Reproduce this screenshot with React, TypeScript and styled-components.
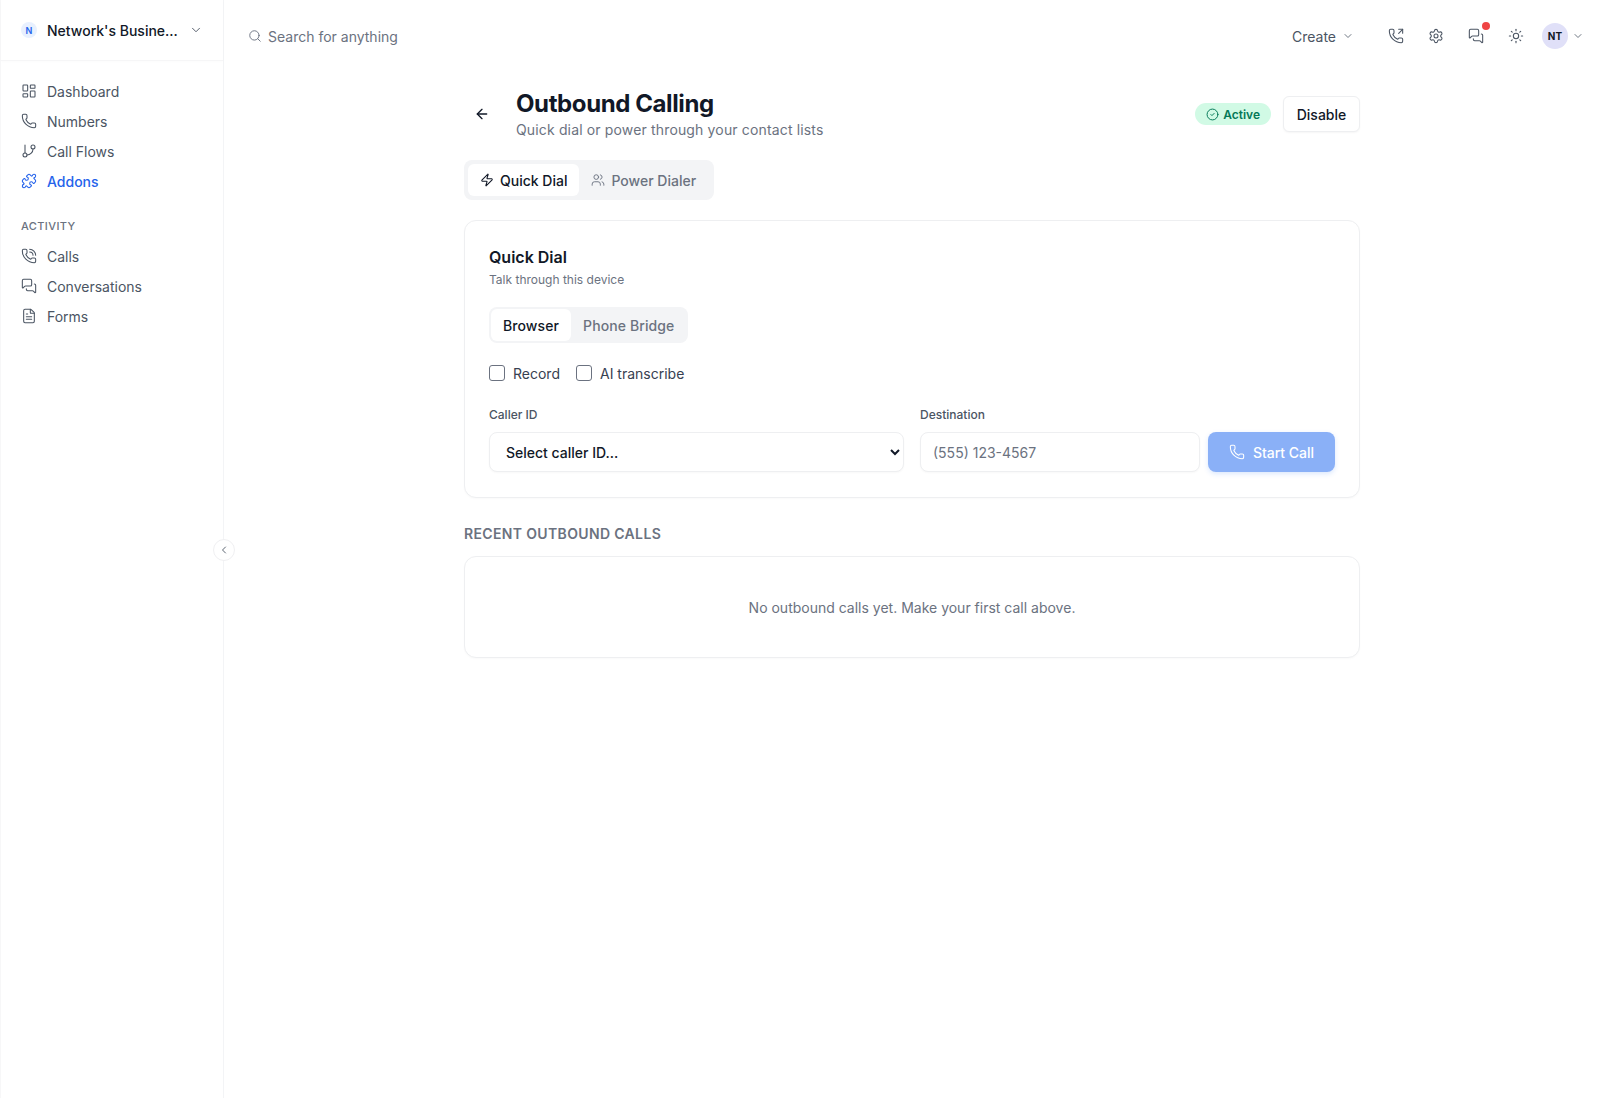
import React from "react";
import styled, { createGlobalStyle } from "styled-components";
import {
  LayoutDashboard, Phone, GitBranch, Puzzle, PhoneCall, MessagesSquare, FileText, Search,
  ChevronDown, ChevronLeft, PhoneOutgoing, Settings, Sun, ArrowLeft, CircleCheck, Zap, Users,
} from "lucide-react";

const Global = createGlobalStyle`
  html, body { margin: 0; padding: 0; background: #fff; }
  * { box-sizing: border-box; }
  body { font-family: Inter, "Noto Sans", sans-serif; color: #111827; -webkit-font-smoothing: antialiased; }
`;

const Shell = styled.div`display: flex; height: 1100px; background: #fff; overflow: hidden;`;
const Sidebar = styled.aside`
  position: relative; width: 224px; flex: none; display: flex; flex-direction: column;
  border-right: 1px solid #f3f4f6; border-left: 1px solid #f7f7f8; margin-bottom: 2px;
`;
const Brand = styled.div`
  height: 61px; padding: 0 20px; display: flex; align-items: center; gap: 10px;
  border-bottom: 1px solid #f6f6f7; box-shadow: 0 1px 2px rgba(0,0,0,.015);
`;
const BrandBadge = styled.span`
  width: 16px; height: 16px; border-radius: 50%; background: #e8f0fe; color: #2563eb;
  font-size: 9px; font-weight: 600; display: flex; align-items: center; justify-content: center; flex: none;
`;
const BrandName = styled.span`font-size: 14px; font-weight: 500; color: #111827; flex: 1; white-space: nowrap;`;
const Nav = styled.nav`display: flex; flex-direction: column; padding: 15px 20px 0;`;
const NavItem = styled.a<{ $active?: boolean }>`
  height: 30px; display: flex; align-items: center; gap: 10px; font-size: 14px; white-space: nowrap;
  font-weight: ${(p) => (p.$active ? 500 : 400)};
  color: ${(p) => (p.$active ? "#2563eb" : "#4b5563")};
`;
const NavHeading = styled.div`
  font-size: 11px; font-weight: 500; letter-spacing: .4px; color: #6b7280;
  margin: 23px 0 8px; line-height: 14px;
`;
const Collapse = styled.button`
  position: absolute; top: 539px; right: -12px; width: 22px; height: 22px; border-radius: 50%;
  border: 1px solid #f0f0f2; background: #fff; display: flex; align-items: center; justify-content: center;
  padding: 0; color: #4b5563;
`;
const Main = styled.main`flex: 1; min-width: 0; display: flex; flex-direction: column;`;
const TopBar = styled.header`height: 72px; display: flex; align-items: center; padding: 0 16px 0 24px; flex: none;`;
const SearchBox = styled.div`flex: 1; display: flex; align-items: center; gap: 6px; font-size: 14px; color: #6b7280;`;
const TopActions = styled.div`display: flex; align-items: center;`;
const CreateBtn = styled.div`display: flex; align-items: center; gap: 6px; font-size: 14px; color: #4b5563; margin-right: 22px;`;
const TopIcon = styled.span`position: relative; width: 40px; height: 24px; display: flex; align-items: center; justify-content: center; color: #4b5563;`;
const Dot = styled.span`position: absolute; top: -2px; right: 6px; width: 8px; height: 8px; border-radius: 50%; background: #ef4444;`;
const Avatar = styled.span`
  width: 26px; height: 26px; border-radius: 50%; background: #e0e0f8; color: #111827; font-size: 10px; font-weight: 700;
  display: flex; align-items: center; justify-content: center; margin-left: 6px; margin-right: 4px;
`;
const Content = styled.div`width: 896px; margin: 0 auto; display: flex; flex-direction: column; transform: translateX(0);`;
const PageHead = styled.div`display: flex; align-items: center; height: 68px; margin-top: 8px;`;
const BackBtn = styled.span`width: 20px; margin-left: 10px; margin-right: 22px; display: flex; color: #111827;`;
const Titles = styled.div`flex: 1;`;
const Title = styled.h1`margin: 0; font-size: 24px; line-height: 32px; font-weight: 700; letter-spacing: -.4px; color: #111827;`;
const Subtitle = styled.p`margin: 0; font-size: 14px; line-height: 20px; color: #6b7280; letter-spacing: .15px;`;
const StatusBadge = styled.span`
  display: flex; align-items: center; gap: 4px; height: 22px; padding: 0 11px; border-radius: 11px;
  background: #d1fae5; color: #047857; font-size: 12px; font-weight: 600; margin-right: 12px;
`;
const OutlineBtn = styled.button`
  height: 36px; width: 77px; border: 1px solid #eeeff1; border-radius: 6px; background: #fff; padding: 0;
  font: 500 14px Inter, sans-serif; color: #111827; box-shadow: 0 1px 2px rgba(0,0,0,.04);
`;
const TabBar = styled.div`
  margin-top: 12px; align-self: flex-start; display: flex; padding: 4px; height: 40px; width: 250px;
  background: #f3f4f6; border-radius: 8px;
`;
const Tab = styled.div<{ $active?: boolean }>`
  height: 32px; display: flex; align-items: center; gap: 6px; padding: 0 12px; border-radius: 6px; white-space: nowrap;
  font-size: 14px; font-weight: 500;
  background: ${(p) => (p.$active ? "#fff" : "transparent")};
  color: ${(p) => (p.$active ? "#111827" : "#6b7280")};
`;
const Card = styled.section`border: 1px solid #eeeff1; border-radius: 12px; background: #fff; box-shadow: 0 1px 2px rgba(0,0,0,.025);`;
const DialCard = styled(Card)`margin-top: 20px; height: 278px; padding: 24px;`;
const CardTitle = styled.h2`margin: 0; font-size: 16px; line-height: 24px; font-weight: 600; color: #111827;`;
const CardSub = styled.p`margin: 2px 0 0; font-size: 12px; line-height: 18px; color: #6b7280;`;
const Segment = styled.div`
  margin-top: 18px; display: inline-flex; padding: 2px; height: 36px; width: 199px; background: #f3f4f6; border-radius: 8px;
`;
const SegItem = styled.div<{ $active?: boolean }>`
  height: 32px; display: flex; align-items: center; justify-content: center; padding: 0 12px; border-radius: 6px;
  white-space: nowrap; font-size: 14px; font-weight: 500; letter-spacing: .1px;
  background: ${(p) => (p.$active ? "#fff" : "transparent")};
  color: ${(p) => (p.$active ? "#111827" : "#6b7280")};
`;
const Checks = styled.div`margin-top: 20px; display: flex; gap: 16px; height: 20px; align-items: center;`;
const CheckLabel = styled.label`display: flex; align-items: center; gap: 8px; font-size: 14px; color: #374151;`;
const CheckBox = styled.span`width: 16px; height: 16px; border: 1px solid #6b7280; border-radius: 3px; background: #fff;`;
const FormRow = styled.div`margin-top: 24px; display: flex; align-items: flex-end; gap: 8px;`;
const Field = styled.div<{ $w: number }>`width: ${(p) => p.$w}px; flex: none; display: flex; flex-direction: column; gap: 9px;`;
const FieldLabel = styled.label`font-size: 12px; line-height: 16px; font-weight: 500; color: #4b5563;`;
const Select = styled.select`
  height: 40px; width: 100%; padding: 0 12px; border: 1px solid #eeeff1; border-radius: 8px; background: #fff;
  font: 500 14px Inter, sans-serif; color: #111827; box-shadow: 0 1px 2px rgba(0,0,0,.03); outline: none;
`;
const Input = styled.input`
  height: 40px; width: 100%; padding: 0 12px; border: 1px solid #eeeff1; border-radius: 8px; background: #fff;
  font: 400 14px Inter, sans-serif; color: #111827; box-shadow: 0 1px 2px rgba(0,0,0,.03); outline: none;
  &::placeholder { color: #6b7280; opacity: 1; }
`;
const CallBtn = styled.button`
  height: 40px; width: 127px; flex: none; border: 0; border-radius: 8px; background: #8ab0f7; color: #fff; padding: 0;
  display: flex; align-items: center; justify-content: center; gap: 8px;
  font: 500 14px Inter, sans-serif; box-shadow: 0 2px 5px rgba(59,130,246,.18);
`;
const SectionHead = styled.h3`
  margin: 26px 0 0; font-size: 14px; line-height: 20px; font-weight: 600; letter-spacing: .35px; color: #6b7280; text-transform: uppercase;
`;
const EmptyCard = styled(Card)`
  margin-top: 12px; height: 102px; display: flex; align-items: center; justify-content: center;
  font-size: 14px; color: #6b7280;
`;

const thin = { size: 16, strokeWidth: 1.6 };
const nav = [
  { label: "Dashboard", Icon: LayoutDashboard },
  { label: "Numbers", Icon: Phone },
  { label: "Call Flows", Icon: GitBranch },
  { label: "Addons", Icon: Puzzle, active: true },
];
const activity = [
  { label: "Calls", Icon: PhoneCall },
  { label: "Conversations", Icon: MessagesSquare },
  { label: "Forms", Icon: FileText },
];

export default function App() {
  return (
    <Shell>
      <Global />
      <Sidebar>
        <Brand>
          <BrandBadge>N</BrandBadge>
          <BrandName>Network's Busine...</BrandName>
          <ChevronDown size={14} color="#4b5563" strokeWidth={1.6} />
        </Brand>
        <Nav>
          {nav.map(({ label, Icon, active }) => (
            <NavItem key={label} $active={active}><Icon {...thin} />{label}</NavItem>
          ))}
          <NavHeading>ACTIVITY</NavHeading>
          {activity.map(({ label, Icon }) => (
            <NavItem key={label}><Icon {...thin} />{label}</NavItem>
          ))}
        </Nav>
        <Collapse><ChevronLeft size={12} strokeWidth={1.8} /></Collapse>
      </Sidebar>
      <Main>
        <TopBar>
          <SearchBox><Search size={14} strokeWidth={1.6} />Search for anything</SearchBox>
          <TopActions>
            <CreateBtn>Create<ChevronDown size={12} strokeWidth={1.6} /></CreateBtn>
            <TopIcon><PhoneOutgoing {...thin} /></TopIcon>
            <TopIcon><Settings {...thin} /></TopIcon>
            <TopIcon><MessagesSquare {...thin} /><Dot /></TopIcon>
            <TopIcon><Sun {...thin} /></TopIcon>
            <Avatar>NT</Avatar>
            <ChevronDown size={12} color="#4b5563" strokeWidth={1.6} />
          </TopActions>
        </TopBar>
        <Content>
          <PageHead>
            <BackBtn><ArrowLeft size={16} strokeWidth={2} /></BackBtn>
            <Titles>
              <Title>Outbound Calling</Title>
              <Subtitle>Quick dial or power through your contact lists</Subtitle>
            </Titles>
            <StatusBadge><CircleCheck size={13} strokeWidth={1.8} />Active</StatusBadge>
            <OutlineBtn>Disable</OutlineBtn>
          </PageHead>
          <TabBar>
            <Tab $active><Zap size={14} strokeWidth={1.8} />Quick Dial</Tab>
            <Tab><Users size={14} strokeWidth={1.6} />Power Dialer</Tab>
          </TabBar>
          <DialCard>
            <CardTitle>Quick Dial</CardTitle>
            <CardSub>Talk through this device</CardSub>
            <Segment>
              <SegItem $active>Browser</SegItem>
              <SegItem>Phone Bridge</SegItem>
            </Segment>
            <Checks>
              <CheckLabel><CheckBox />Record</CheckLabel>
              <CheckLabel><CheckBox />AI transcribe</CheckLabel>
            </Checks>
            <FormRow>
              <Field $w={415} style={{ marginRight: 8 }}>
                <FieldLabel>Caller ID</FieldLabel>
                <Select defaultValue=""><option value="">Select caller ID...</option></Select>
              </Field>
              <Field $w={280}>
                <FieldLabel>Destination</FieldLabel>
                <Input placeholder="(555) 123-4567" />
              </Field>
              <CallBtn><Phone size={16} strokeWidth={1.6} />Start Call</CallBtn>
            </FormRow>
          </DialCard>
          <SectionHead>Recent Outbound Calls</SectionHead>
          <EmptyCard>No outbound calls yet. Make your first call above.</EmptyCard>
        </Content>
      </Main>
    </Shell>
  );
}
